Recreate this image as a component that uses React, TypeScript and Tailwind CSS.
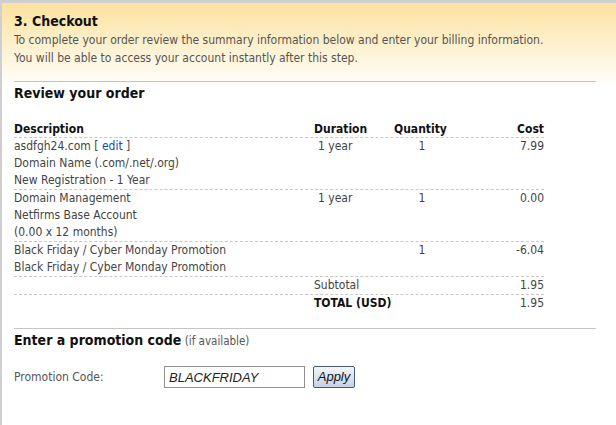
import React from "react";

type Row = {
  lines: React.ReactNode[];
  duration?: string;
  quantity?: string;
  cost: string;
};

const rows: Row[] = [
  {
    lines: [
      <span key="d">
        asdfgh24.com [ <a className="text-[#1d4ea6]">edit</a> ]
      </span>,
      "Domain Name (.com/.net/.org)",
      "New Registration - 1 Year",
    ],
    duration: "1 year",
    quantity: "1",
    cost: "7.99",
  },
  {
    lines: ["Domain Management", "Netfirms Base Account", "(0.00 x 12 months)"],
    duration: "1 year",
    quantity: "1",
    cost: "0.00",
  },
  {
    lines: ["Black Friday / Cyber Monday Promotion", "Black Friday / Cyber Monday Promotion"],
    quantity: "1",
    cost: "-6.04",
  },
];

const cols = "grid grid-cols-[300px_80px_56px_94px]";

function App() {
  return (
    <div
      className="w-[616px] h-[425px] overflow-hidden border-t-[3px] border-l-2 border-[#cfcfcf] bg-white bg-[linear-gradient(to_bottom,#fde2a0_0px,#fdeec6_35px,#ffffff_85px)] text-[12px] text-[#444] font-stretch-condensed"
      style={{ fontFamily: "'DejaVu Sans', sans-serif" }}
    >
      <div className="pl-3 pr-5">
        <h1 className="pt-[9px] text-[14px] font-bold leading-[18px] text-[#111]">3. Checkout</h1>
        <p className="mt-[1px] leading-[18px] text-[#555]">
          To complete your order review the summary information below and enter your billing information.
          <br />
          You will be able to access your account instantly after this step.
        </p>
        <div className="mt-[14px] border-t border-[#c4c4c4]" />
        <h2 className="pt-[2px] text-[14px] font-bold leading-[18px] text-[#111]">Review your order</h2>

        <div className="mt-[19px] w-[530px]">
          <div className={`${cols} border-b border-dashed border-[#c8c8c8] font-bold leading-[16px] text-[#111]`}>
            <div>Description</div>
            <div>Duration</div>
            <div>Quantity</div>
            <div className="text-right">Cost</div>
          </div>
          {rows.map((row, i) => (
            <div key={i} className={`${cols} border-b border-dashed border-[#c8c8c8] leading-[17px]`}>
              <div>
                {row.lines.map((l, j) => (
                  <div key={j}>{l}</div>
                ))}
              </div>
              <div className="pl-1">{row.duration}</div>
              <div className="text-center">{row.quantity}</div>
              <div className="text-right">{row.cost}</div>
            </div>
          ))}
          <div className={`${cols} border-b border-dashed border-[#c8c8c8] leading-[17px]`}>
            <div />
            <div className="col-span-2">Subtotal</div>
            <div className="text-right">1.95</div>
          </div>
          <div className={`${cols} leading-[17px]`}>
            <div />
            <div className="col-span-2 font-bold text-[#111]">TOTAL (USD)</div>
            <div className="text-right">1.95</div>
          </div>
        </div>

        <div className="mt-[16px] border-t border-[#c4c4c4]" />
        <h2 className="pt-[2px] leading-[18px] text-[#111]">
          <span className="text-[14px] font-bold">Enter a promotion code</span>{" "}
          <span className="text-[11.5px] text-[#555]">(if available)</span>
        </h2>

        <div className="mt-[16px] flex items-center">
          <label className="w-[150px] text-[#555]">Promotion Code:</label>
          <input
            defaultValue="BLACKFRIDAY"
            className="h-[22px] w-[141px] border border-[#8f8f8f] bg-white px-1 text-[13px] italic text-[#222] outline-none"
            style={{ fontFamily: "'Liberation Sans', Arial, sans-serif" }}
          />
          <button
            className="ml-2 h-[22px] w-[42px] rounded-[2px] border border-[#4a5a75] bg-[linear-gradient(to_bottom,#f2f5fb,#c6d1e6)] text-[13px] italic text-[#111]"
            style={{ fontFamily: "'Liberation Sans', Arial, sans-serif" }}
          >
            Apply
          </button>
        </div>
      </div>
    </div>
  );
}

export default App;
